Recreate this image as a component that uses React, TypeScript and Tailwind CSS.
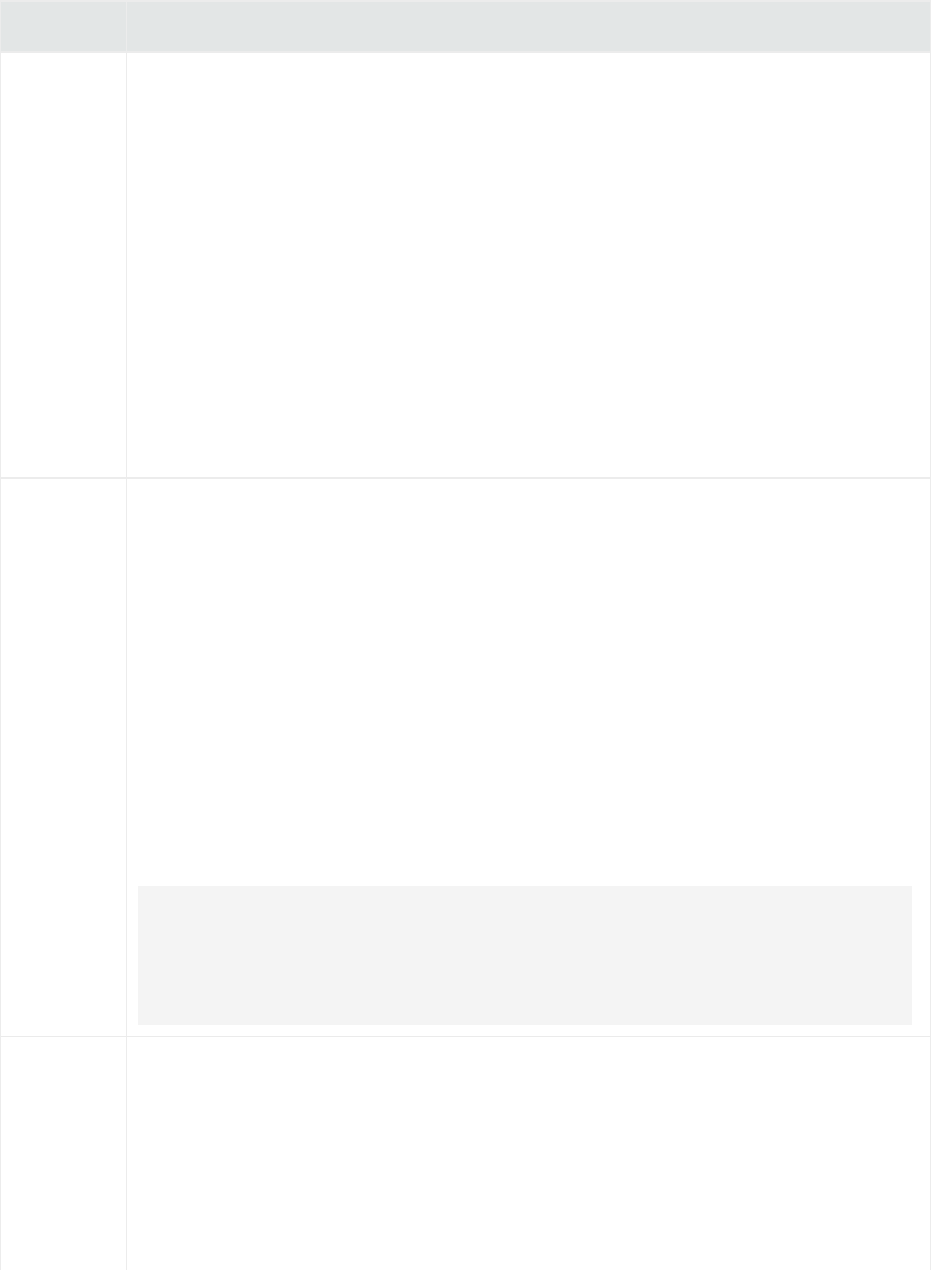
import React from "react";

export default function App() {
  return (
    <div className="w-[931px] h-[1270px] overflow-hidden bg-white">
      <div className="w-full border-l border-r border-t-2 border-[#ececec]">
        <div className="flex h-[51px] bg-[#e3e6e6] border-b-2 border-[#ececec]">
          <div className="w-[126px] border-r border-[#ececec]"></div>
          <div className="flex-1"></div>
        </div>
        <div className="flex h-[426px] border-b-2 border-[#ececec]">
          <div className="w-[126px] border-r border-[#ececec]"></div>
          <div className="flex-1"></div>
        </div>
        <div className="flex h-[558px] border-b border-[#ebebeb]">
          <div className="w-[126px] border-r border-[#ececec]"></div>
          <div className="flex-1 flex flex-col justify-end pl-[11px] pr-[18px] pb-[11px]">
            <div className="h-[139px] bg-[#f4f4f4]"></div>
          </div>
        </div>
        <div className="flex h-[233px]">
          <div className="w-[126px] border-r border-[#ececec]"></div>
          <div className="flex-1"></div>
        </div>
      </div>
    </div>
  );
}
